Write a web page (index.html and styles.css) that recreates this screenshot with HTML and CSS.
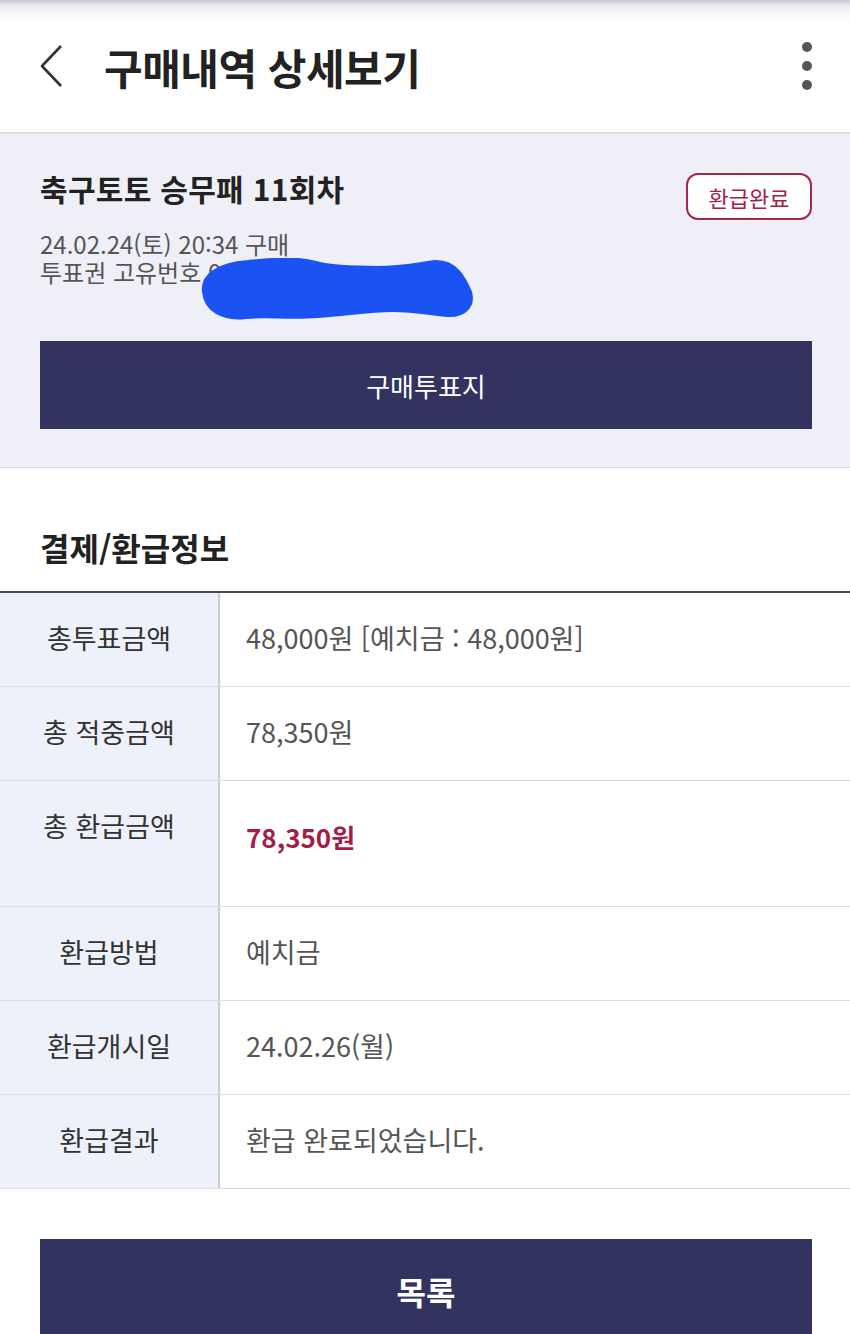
FILE: index.html
```html
<!DOCTYPE html>
<html lang="ko">
<head>
  <meta charset="UTF-8">
  <title>구매내역 상세보기</title>
  <link rel="stylesheet" href="styles.css">
</head>
<body>

  <header class="topbar">
    <svg class="back" width="26" height="44" viewBox="0 0 26 44">
      <path d="M22 2 L3 22 L22 42" fill="none" stroke="#333" stroke-width="2.6" stroke-linejoin="round"/>
    </svg>
    <h1 class="page-title">구매내역 상세보기</h1>
    <div class="kebab">
      <span></span><span></span><span></span>
    </div>
  </header>

  <section class="summary">
    <div class="summary-head">
      <h2 class="game-title">축구토토 승무패 11회차</h2>
      <span class="badge">환급완료</span>
    </div>
    <p class="meta first">24.02.24(토) 20:34 구매</p>
    <p class="meta ticket">투표권 고유번호 0000-00
      <svg class="scribble" width="280" height="64" viewBox="0 0 280 64">
        <path d="M6 34 C4 18 20 6 50 4 C80 1 100 0 118 5 C132 9 150 10 180 10 C205 10 220 6 238 4 C258 4 266 20 272 34 C276 48 266 58 250 57 C230 55 215 52 195 52 C170 52 150 56 120 58 C90 60 70 57 48 59 C25 62 8 52 6 34 Z" fill="#1b52f2" stroke="#1b52f2" stroke-width="4" stroke-linejoin="round"/>
      </svg>
    </p>
    <button class="dark-btn">구매투표지</button>
  </section>

  <section class="payment">
    <h2 class="section-title">결제/환급정보</h2>
    <div class="info-table">
      <div class="row">
        <div class="label">총투표금액</div>
        <div class="value">48,000원 [예치금 : 48,000원]</div>
      </div>
      <div class="row">
        <div class="label">총 적중금액</div>
        <div class="value">78,350원</div>
      </div>
      <div class="row tall">
        <div class="label">총 환급금액</div>
        <div class="value refund">78,350원</div>
      </div>
      <div class="row">
        <div class="label">환급방법</div>
        <div class="value">예치금</div>
      </div>
      <div class="row">
        <div class="label">환급개시일</div>
        <div class="value">24.02.26(월)</div>
      </div>
      <div class="row">
        <div class="label">환급결과</div>
        <div class="value">환급 완료되었습니다.</div>
      </div>
    </div>
    <button class="dark-btn list-btn">목록</button>
  </section>

</body>
</html>
```

FILE: styles.css
```css
body {
  margin: 0;
  font-family: "Noto Sans CJK KR", "Noto Sans", sans-serif;
  color: #333;
  background: #fff;
}

.topbar {
  height: 132px;
  display: flex;
  align-items: center;
  padding: 0 38px 0 39px;
  border-bottom: 2px solid #dcdde3;
  background: linear-gradient(#c6c7d4 0, #ecedf3 6px, #fbfbfd 16px, #fff 26px);
}

.back {
  display: block;
}

.page-title {
  margin: 0 0 0 39px;
  font-size: 42px;
  font-weight: bold;
  color: #222;
  letter-spacing: -0.5px;
  flex: 1;
}

.kebab {
  display: flex;
  flex-direction: column;
  gap: 9px;
}

.kebab span {
  width: 10px;
  height: 10px;
  border-radius: 50%;
  background: #555;
}

.summary {
  background: #eff0f7;
  padding: 34px 38px 38px 40px;
  border-bottom: 1px solid #dcdde4;
}

.summary-head {
  display: flex;
  justify-content: space-between;
  align-items: flex-start;
}

.game-title {
  margin: 0;
  font-size: 30px;
  line-height: 40px;
  font-weight: bold;
  color: #222;
  letter-spacing: 0.3px;
}

.badge {
  margin: 5px 0 -12px;
  width: 122px;
  height: 43px;
  border: 2px solid #a8264d;
  border-radius: 12px;
  background: #fff;
  color: #a3204a;
  font-size: 22px;
  display: flex;
  align-items: center;
  justify-content: center;
}

.meta {
  margin: 0;
  font-size: 24px;
  line-height: 28px;
  color: #555;
}

.meta.first {
  margin-top: 22px;
}

.ticket {
  position: relative;
}

.scribble {
  position: absolute;
  left: 158px;
  top: 0;
}

.dark-btn {
  display: block;
  width: 100%;
  height: 88px;
  margin-top: 55px;
  border: none;
  background: #32335f;
  color: #fff;
  font-family: inherit;
  font-size: 26px;
}

.payment {
  padding-top: 58px;
}

.section-title {
  margin: 0 0 23px 40px;
  font-size: 32px;
  line-height: 42px;
  font-weight: bold;
  color: #222;
}

.info-table {
  border-top: 2px solid #474a5c;
}

.row {
  display: grid;
  grid-template-columns: 220px 1fr;
  height: 93px;
  border-bottom: 1px solid #dedfe2;
}

.row.tall {
  height: 125px;
}

.label {
  background: #edf2fa;
  border-right: 2px solid #c9cdd3;
  text-align: center;
  font-size: 27px;
  line-height: 34px;
  padding-top: 28px;
  color: #333;
}

.value {
  padding: 28px 0 0 26px;
  font-size: 27px;
  line-height: 34px;
  color: #555;
}

.value.refund {
  padding-top: 39px;
  font-size: 26px;
  color: #a51c45;
  font-weight: bold;
}

.list-btn {
  width: calc(100% - 78px);
  margin: 50px 38px 0 40px;
  height: 104px;
  font-size: 32px;
  font-weight: bold;
}
```
